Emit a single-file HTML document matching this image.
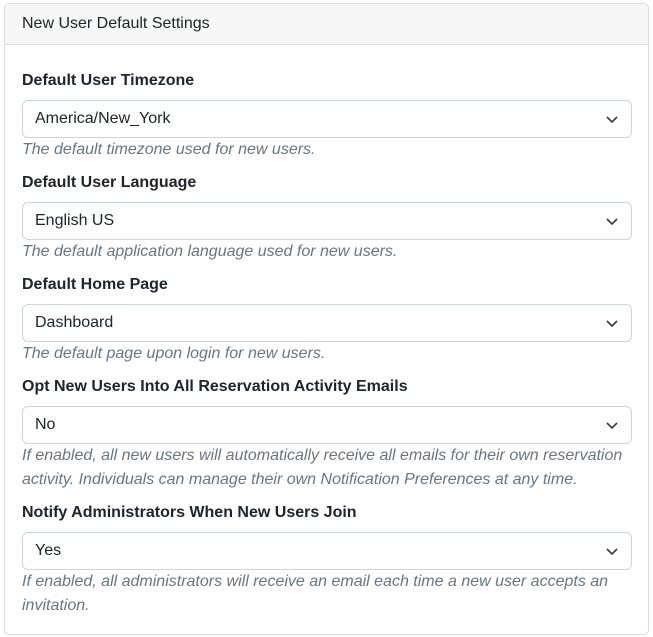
<!DOCTYPE html>
<html><head><style>
*{box-sizing:border-box;margin:0;padding:0}
body{width:653px;height:637px;background:#fff;font-family:"Liberation Sans",Arial,sans-serif;font-size:16px;color:#212529;position:relative}
.card{position:absolute;left:4px;top:3px;width:645px;height:632px;border:1px solid #dcdcdc;border-radius:5px;overflow:hidden}
.hd{height:41px;background:#f7f7f7;border-bottom:1px solid #dcdcdc;padding-left:17px;line-height:39px;font-size:16px}
.bd{padding:24px 16px 0 17px}
.lbl{font-weight:bold;line-height:24px;height:24px;margin-bottom:7px}
.sel{height:38px;border:1px solid #ced4da;border-radius:6px;padding-left:12px;line-height:36px;position:relative}
.sel svg{position:absolute;right:13px;top:13px}
.help{font-style:italic;color:#6c757d;line-height:24px;margin-bottom:9px}
</style></head><body>
<div class="card">
<div class="hd">New User Default Settings</div>
<div class="bd">
<div class="lbl">Default User Timezone</div>
<div class="sel">America/New_York<svg width="12" height="10" viewBox="0 0 12 10"><path d="M1 3l5 5 5-5" fill="none" stroke="#343a40" stroke-width="1.6"/></svg></div>
<div class="help">The default timezone used for new users.</div>
<div class="lbl">Default User Language</div>
<div class="sel">English US<svg width="12" height="10" viewBox="0 0 12 10"><path d="M1 3l5 5 5-5" fill="none" stroke="#343a40" stroke-width="1.6"/></svg></div>
<div class="help">The default application language used for new users.</div>
<div class="lbl">Default Home Page</div>
<div class="sel">Dashboard<svg width="12" height="10" viewBox="0 0 12 10"><path d="M1 3l5 5 5-5" fill="none" stroke="#343a40" stroke-width="1.6"/></svg></div>
<div class="help">The default page upon login for new users.</div>
<div class="lbl">Opt New Users Into All Reservation Activity Emails</div>
<div class="sel">No<svg width="12" height="10" viewBox="0 0 12 10"><path d="M1 3l5 5 5-5" fill="none" stroke="#343a40" stroke-width="1.6"/></svg></div>
<div class="help">If enabled, all new users will automatically receive all emails for their own reservation activity. Individuals can manage their own Notification Preferences at any time.</div>
<div class="lbl">Notify Administrators When New Users Join</div>
<div class="sel">Yes<svg width="12" height="10" viewBox="0 0 12 10"><path d="M1 3l5 5 5-5" fill="none" stroke="#343a40" stroke-width="1.6"/></svg></div>
<div class="help">If enabled, all administrators will receive an email each time a new user accepts an invitation.</div>
</div></div>
</body></html>
